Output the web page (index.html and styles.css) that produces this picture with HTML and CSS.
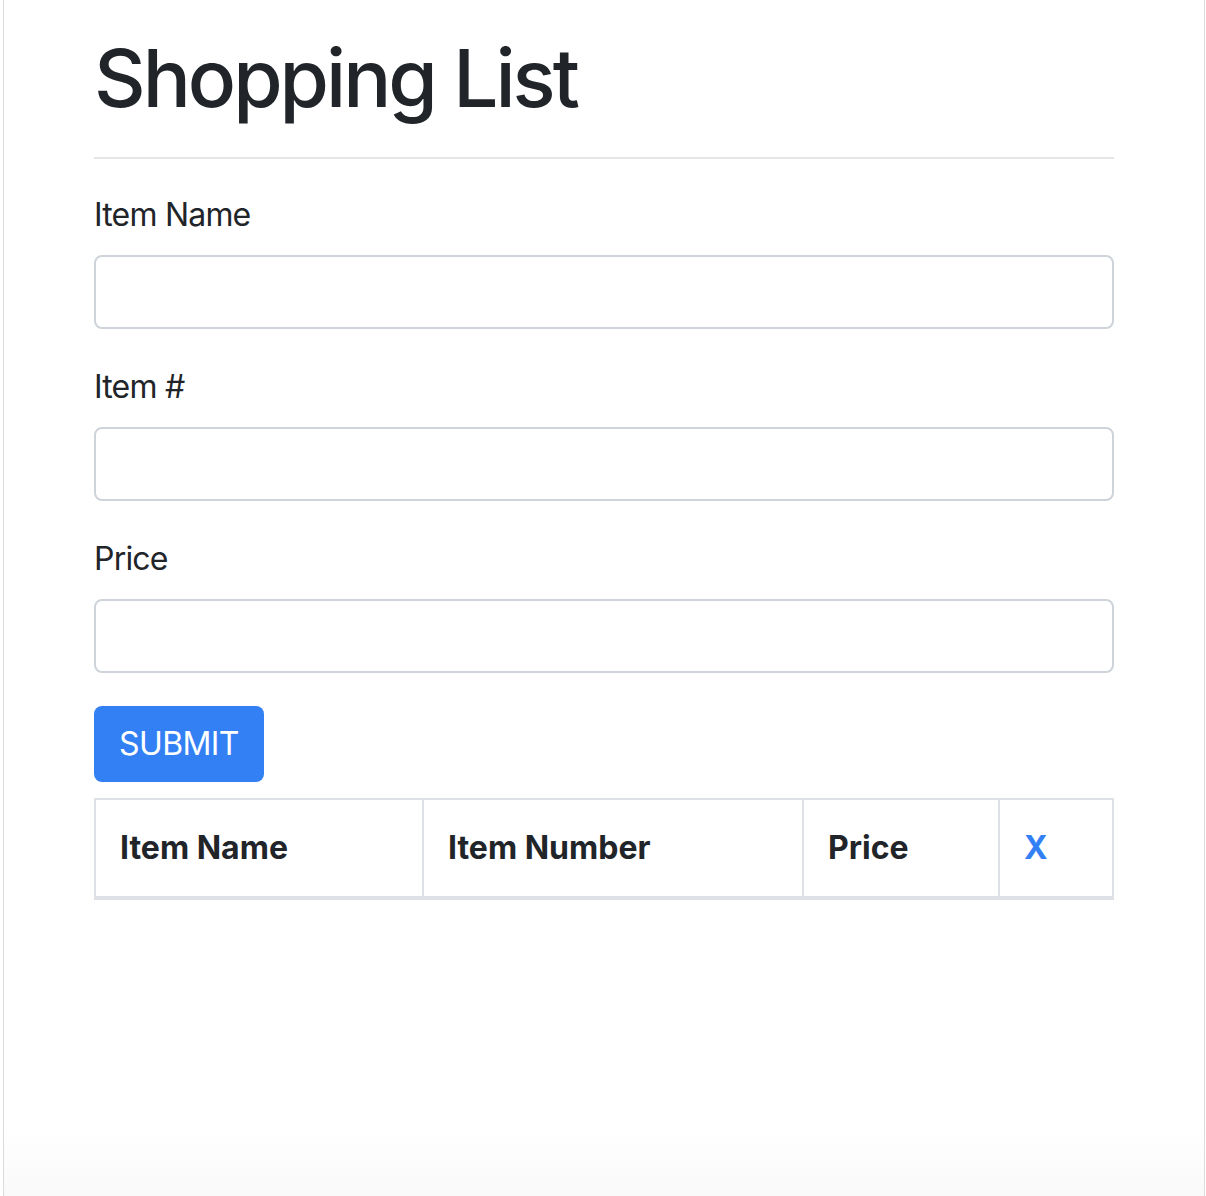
FILE: index.html
```html
<!DOCTYPE html>
<html lang="en">
<head>
<meta charset="utf-8">
<title>Shopping List</title>
<link rel="stylesheet" href="styles.css">
</head>
<body>
<div class="frame">
  <div class="container">
    <h1 class="title">Shopping List</h1>
    <hr class="rule">
    <form class="form">
      <div class="group">
        <label class="label" for="name">Item Name</label>
        <input class="input" id="name" type="text">
      </div>
      <div class="group">
        <label class="label" for="num">Item #</label>
        <input class="input" id="num" type="text">
      </div>
      <div class="group">
        <label class="label" for="price">Price</label>
        <input class="input" id="price" type="text">
      </div>
      <button class="btn" type="button">SUBMIT</button>
    </form>
    <table class="table">
      <colgroup>
        <col class="c1"><col class="c2"><col class="c3"><col class="c4">
      </colgroup>
      <thead>
        <tr>
          <th>Item Name</th>
          <th>Item Number</th>
          <th>Price</th>
          <th class="x">X</th>
        </tr>
      </thead>
    </table>
  </div>
</div>
</body>
</html>
```
FILE: styles.css
```css
* { box-sizing: border-box; }
html, body { margin: 0; padding: 0; background: #fff; }
body {
  font-family: Inter, "Noto Sans", "Liberation Sans", sans-serif;
  color: #212529;
  font-size: 32px;
  line-height: 1.5;
}
.frame {
  margin-left: 3px;
  width: 1202px;
  min-height: 1196px;
  border-left: 1px solid #dcdcdc;
  border-right: 1px solid #dcdcdc;
  background: linear-gradient(to bottom, #fff 0, #fff 1130px, #f9f9f9 1196px);
}
.container {
  width: 1020px;
  margin-left: 90px;
  padding-top: 30px;
}
.title {
  margin: 0;
  font-size: 80px;
  font-weight: 500;
  line-height: 96px;
  letter-spacing: -3px;
}
.rule {
  margin: 31px 0 32px;
  border: 0;
  border-top: 2px solid #e5e5e5;
  height: 0;
}
.form { margin: 0; }
.group { margin-bottom: 34px; }
.group:last-of-type { margin-bottom: 33px; }
.label {
  display: block;
  margin-bottom: 16px;
  line-height: 48px;
  letter-spacing: -0.8px;
}
.input {
  display: block;
  width: 100%;
  height: 74px;
  border: 2px solid #ced4da;
  border-radius: 8px;
  background: #fff;
  font: inherit;
  padding: 0 24px;
}
.btn {
  display: block;
  width: 170px;
  height: 76px;
  border: 0;
  border-radius: 8px;
  background: #3380f5;
  color: #fff;
  font: inherit;
  letter-spacing: -0.6px;
  line-height: 48px;
  padding: 0;
  margin-bottom: 16px;
}
.table {
  width: 1018px;
  border-collapse: collapse;
  table-layout: fixed;
  border: 2px solid #dee2e6;
}
.c1 { width: 328px; }
.c2 { width: 380px; }
.c3 { width: 196px; }
.c4 { width: 114px; }
.table th {
  text-align: left;
  font-weight: 700;
  padding: 24px;
  line-height: 48px;
  border: 2px solid #dee2e6;
  border-bottom-width: 4px;
}
.table th.x { color: #3380f5; }
```
